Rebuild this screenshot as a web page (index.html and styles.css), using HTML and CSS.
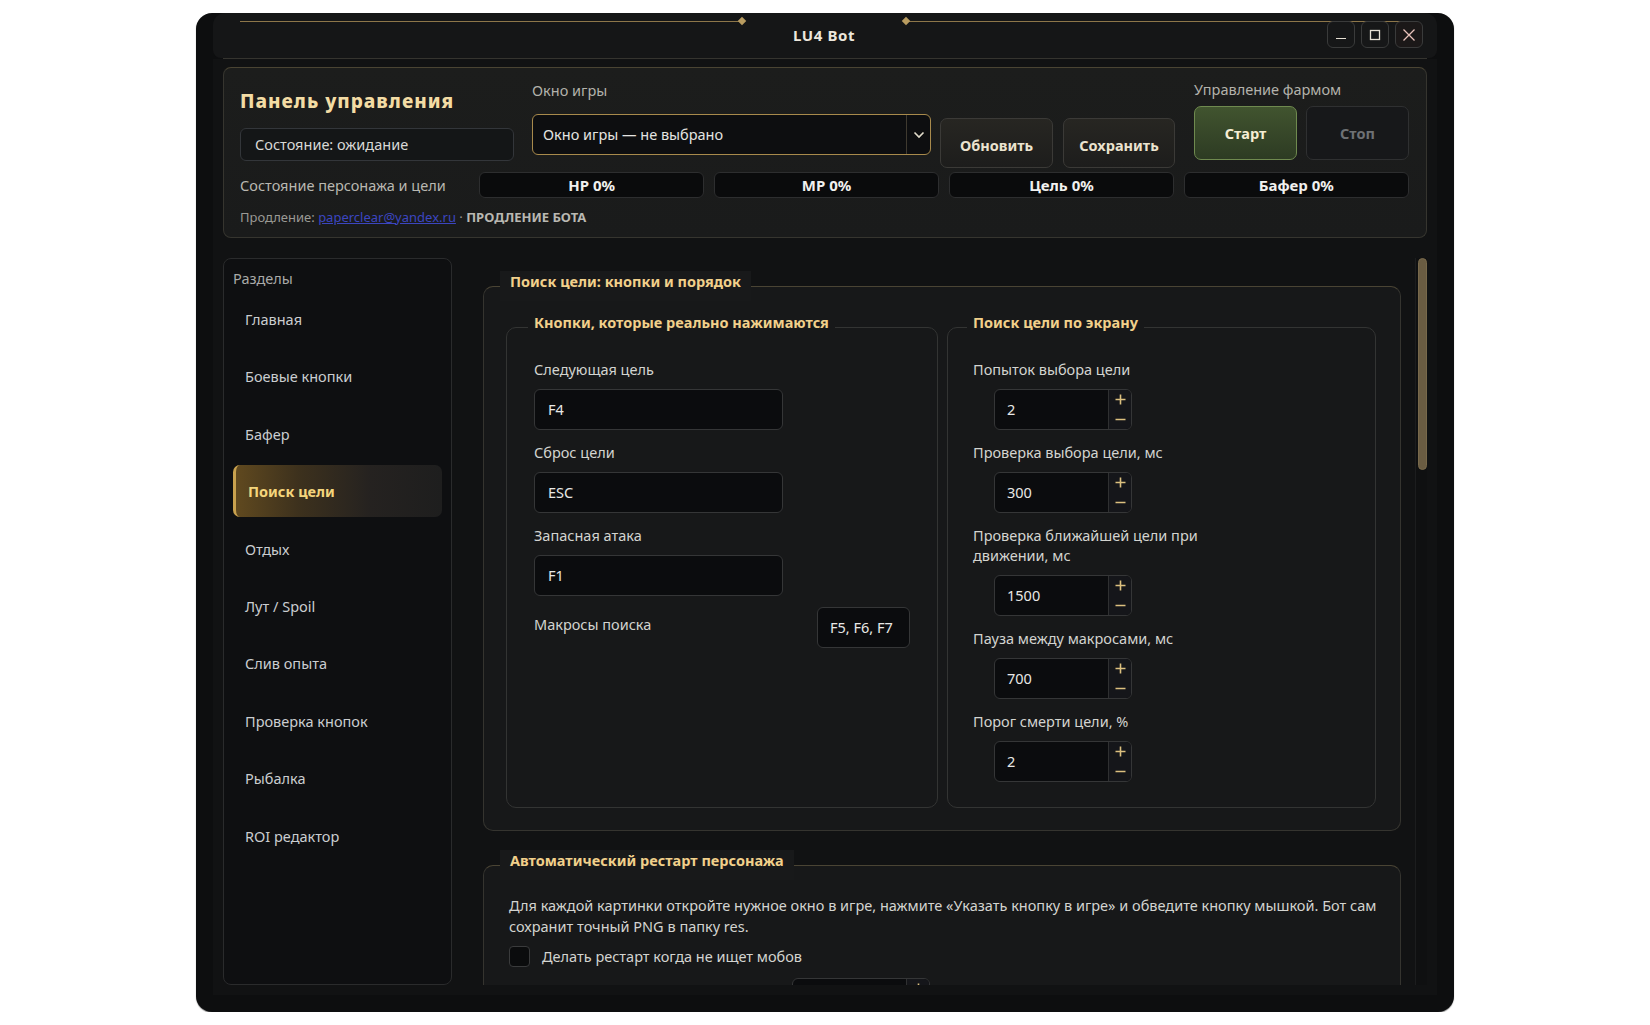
FILE: index.html
```html
<!DOCTYPE html>
<html lang="ru">
<head>
<meta charset="utf-8">
<title>LU4 Bot</title>
<link rel="stylesheet" href="styles.css">
</head>
<body>
<div class="window">
  <div class="titlebar">
    <div class="deco-line"></div>
    <div class="diamond"></div>
    <div class="title">LU4 Bot</div>
    <div class="diamond"></div>
    <div class="deco-line"></div>
    <div class="win-buttons">
      <div class="win-btn"><svg width="12" height="12" viewBox="0 0 12 12"><path d="M1 9.5h10" stroke="#e6e0d4" stroke-width="1.2"/></svg></div>
      <div class="win-btn"><svg width="12" height="12" viewBox="0 0 12 12"><rect x="1.5" y="1.5" width="9" height="9" fill="none" stroke="#e6e0d4" stroke-width="1.3"/></svg></div>
      <div class="win-btn close"><svg width="14" height="14" viewBox="0 0 14 14"><path d="M1.5 1.5l11 11M12.5 1.5l-11 11" stroke="#e8c2ba" stroke-width="1.3"/></svg></div>
    </div>
  </div>
  <div class="separator"></div>
  <div class="body">
    <div class="panel">
      <div class="row-a">
        <div class="col1">
          <div class="panel-title">Панель управления</div>
          <div class="state-box">Состояние: ожидание</div>
        </div>
        <div class="col2">
          <div class="small-label">Окно игры</div>
          <div class="combo">
            <span class="combo-text">Окно игры — не выбрано</span>
            <span class="combo-arrow"><svg width="12" height="8" viewBox="0 0 12 8"><path d="M1.5 1.5l4.5 4.5 4.5-4.5" fill="none" stroke="#e2dccb" stroke-width="1.6"/></svg></span>
          </div>
        </div>
        <div class="btn action">Обновить</div>
        <div class="btn action">Сохранить</div>
        <div class="col3">
          <div class="small-label">Управление фармом</div>
          <div class="farm-buttons">
            <div class="btn start">Старт</div>
            <div class="btn stop">Стоп</div>
          </div>
        </div>
      </div>
      <div class="row-b">
        <div class="row-b-label">Состояние персонажа и цели</div>
        <div class="pill">HP 0%</div>
        <div class="pill">MP 0%</div>
        <div class="pill">Цель 0%</div>
        <div class="pill">Бафер 0%</div>
      </div>
      <div class="row-c">Продление: <a href="#" class="mail">paperclear@yandex.ru</a> · <b>ПРОДЛЕНИЕ БОТА</b></div>
    </div>

    <div class="main">
      <div class="sidebar">
        <div class="sidebar-label">Разделы</div>
        <div class="nav">
          <div class="nav-item">Главная</div>
          <div class="nav-item">Боевые кнопки</div>
          <div class="nav-item">Бафер</div>
          <div class="nav-item active">Поиск цели</div>
          <div class="nav-item">Отдых</div>
          <div class="nav-item">Лут / Spoil</div>
          <div class="nav-item">Слив опыта</div>
          <div class="nav-item">Проверка кнопок</div>
          <div class="nav-item">Рыбалка</div>
          <div class="nav-item">ROI редактор</div>
        </div>
      </div>

      <div class="scroll-area">
        <div class="scroll-content">
          <fieldset class="group">
            <legend class="group-title">Поиск цели: кнопки и порядок</legend>
            <div class="subgroups">
              <fieldset class="subgroup sub-left">
                <legend class="sub-title">Кнопки, которые реально нажимаются</legend>
                <div class="field-label">Следующая цель</div>
                <div class="text-input">F4</div>
                <div class="field-label">Сброс цели</div>
                <div class="text-input">ESC</div>
                <div class="field-label">Запасная атака</div>
                <div class="text-input">F1</div>
                <div class="macro-row">
                  <div class="field-label macro-label">Макросы поиска</div>
                  <div class="text-input macro-input">F5, F6, F7</div>
                </div>
              </fieldset>
              <fieldset class="subgroup sub-right">
                <legend class="sub-title">Поиск цели по экрану</legend>
                <div class="field-label">Попыток выбора цели</div>
                <div class="spin"><span class="spin-value">2</span><span class="spin-btns"><span class="sb"><svg width="11" height="11" viewBox="0 0 11 11"><path d="M5.5 0.5v10M0.5 5.5h10" stroke="#dcc07f" stroke-width="1.6"/></svg></span><span class="sb"><svg width="11" height="11" viewBox="0 0 11 11"><path d="M0.5 5.5h10" stroke="#dcc07f" stroke-width="1.6"/></svg></span></span></div>
                <div class="field-label">Проверка выбора цели, мс</div>
                <div class="spin"><span class="spin-value">300</span><span class="spin-btns"><span class="sb"><svg width="11" height="11" viewBox="0 0 11 11"><path d="M5.5 0.5v10M0.5 5.5h10" stroke="#dcc07f" stroke-width="1.6"/></svg></span><span class="sb"><svg width="11" height="11" viewBox="0 0 11 11"><path d="M0.5 5.5h10" stroke="#dcc07f" stroke-width="1.6"/></svg></span></span></div>
                <div class="field-label">Проверка ближайшей цели при<br>движении, мс</div>
                <div class="spin"><span class="spin-value">1500</span><span class="spin-btns"><span class="sb"><svg width="11" height="11" viewBox="0 0 11 11"><path d="M5.5 0.5v10M0.5 5.5h10" stroke="#dcc07f" stroke-width="1.6"/></svg></span><span class="sb"><svg width="11" height="11" viewBox="0 0 11 11"><path d="M0.5 5.5h10" stroke="#dcc07f" stroke-width="1.6"/></svg></span></span></div>
                <div class="field-label">Пауза между макросами, мс</div>
                <div class="spin"><span class="spin-value">700</span><span class="spin-btns"><span class="sb"><svg width="11" height="11" viewBox="0 0 11 11"><path d="M5.5 0.5v10M0.5 5.5h10" stroke="#dcc07f" stroke-width="1.6"/></svg></span><span class="sb"><svg width="11" height="11" viewBox="0 0 11 11"><path d="M0.5 5.5h10" stroke="#dcc07f" stroke-width="1.6"/></svg></span></span></div>
                <div class="field-label">Порог смерти цели, %</div>
                <div class="spin"><span class="spin-value">2</span><span class="spin-btns"><span class="sb"><svg width="11" height="11" viewBox="0 0 11 11"><path d="M5.5 0.5v10M0.5 5.5h10" stroke="#dcc07f" stroke-width="1.6"/></svg></span><span class="sb"><svg width="11" height="11" viewBox="0 0 11 11"><path d="M0.5 5.5h10" stroke="#dcc07f" stroke-width="1.6"/></svg></span></span></div>
              </fieldset>
            </div>
          </fieldset>

          <fieldset class="group group2">
            <legend class="group-title">Автоматический рестарт персонажа</legend>
            <p class="desc">Для каждой картинки откройте нужное окно в игре, нажмите «Указать кнопку в игре» и обведите кнопку мышкой. Бот сам<br>сохранит точный PNG в папку res.</p>
            <label class="check-row"><span class="checkbox"></span><span>Делать рестарт когда не ищет мобов</span></label>
            <div class="restart-row">
              <div class="spin"><span class="spin-value"></span><span class="spin-btns"><span class="sb"><svg width="11" height="11" viewBox="0 0 11 11"><path d="M5.5 0.5v10M0.5 5.5h10" stroke="#dcc07f" stroke-width="1.6"/></svg></span><span class="sb"><svg width="11" height="11" viewBox="0 0 11 11"><path d="M0.5 5.5h10" stroke="#dcc07f" stroke-width="1.6"/></svg></span></span></div>
            </div>
          </fieldset>
        </div>
        <div class="scrollbar"><div class="thumb"></div></div>
      </div>
    </div>
  </div>
</div>
</body>
</html>
```

FILE: styles.css
```css
* { box-sizing: border-box; }

body {
  margin: 0;
  background: #ffffff;
  font-family: "Noto Sans", "Open Sans", sans-serif;
  font-size: 14.5px;
  color: #d2d3cf;
}

.window {
  width: 1258px;
  height: 999px;
  margin: 13px 0 0 196px;
  padding: 0 17px 17px;
  background: #0d0e0f;
  border-radius: 16px;
  box-shadow: 0 1px 1px rgba(0,0,0,0.45);
  display: flex;
  flex-direction: column;
  overflow: hidden;
}

/* ---------- title bar ---------- */
.titlebar {
  position: relative;
  height: 45px;
  flex: none;
  display: flex;
  align-items: flex-start;
  padding: 0 29px 0 27px;
  background: #151617;
  border-radius: 12px 12px 8px 8px;
}
.deco-line {
  flex: 1;
  height: 1px;
  margin-top: 8px;
  background: #8d7649;
}
.diamond {
  width: 6px;
  height: 6px;
  margin: 5px -3px 0;
  background: #b99c60;
  transform: rotate(45deg);
  flex: none;
}
.title {
  width: 164px;
  flex: none;
  text-align: center;
  line-height: 45px;
  font-weight: 700;
  font-size: 15px;
  letter-spacing: 0.6px;
  color: #ece7dc;
}
.win-buttons {
  position: absolute;
  top: 8px;
  right: 14px;
  display: flex;
  gap: 6px;
}
.win-btn {
  width: 28px;
  height: 27px;
  border: 1px solid #3a3b3b;
  border-radius: 6px;
  background: #161718;
  display: flex;
  align-items: center;
  justify-content: center;
}
.win-btn.close { background: #1b1818; }

.separator {
  height: 1px;
  margin: 0 10px;
  background: #35342f;
  flex: none;
}

.body {
  flex: 1;
  min-height: 0;
  padding: 8px 10px 10px;
  display: flex;
  flex-direction: column;
  gap: 20px;
  background: #111213;
}

/* ---------- top panel ---------- */
.panel {
  height: 171px;
  flex: none;
  border: 1px solid #36352f;
  border-top-color: #4a4433;
  border-radius: 8px;
  background: linear-gradient(180deg, #1c1d1c 0%, #1a1b1b 100%);
  padding: 12px 17px 11px 16px;
}
.row-a {
  display: flex;
  align-items: flex-start;
  height: 88px;
}
.col1 { width: 274px; flex: none; }
.panel-title {
  margin-top: 9px;
  line-height: 24px;
  font-size: 19px;
  font-weight: 800;
  letter-spacing: 1px;
  color: #f3dca4;
}
.state-box {
  margin-top: 15px;
  height: 33px;
  line-height: 31px;
  padding-left: 14px;
  border: 1px solid #33363a;
  border-radius: 6px;
  background: #141617;
  color: #d9d9d6;
}
.col2 { width: 399px; margin-left: 18px; flex: none; }
.small-label {
  line-height: 20px;
  color: #b3b2ab;
}
.col3 .small-label { line-height: 18px; }
.combo {
  margin-top: 14px;
  height: 41px;
  display: flex;
  border: 1px solid #a88a4c;
  border-radius: 6px;
  background: #0d0e10;
}
.combo-text {
  flex: 1;
  padding-left: 10px;
  line-height: 39px;
  color: #e4e4e1;
}
.combo-arrow {
  width: 24px;
  border-left: 1px solid #3f3a30;
  display: flex;
  align-items: center;
  justify-content: center;
}
.btn {
  display: flex;
  align-items: center;
  justify-content: center;
  font-weight: 700;
  font-size: 14.5px;
  border-radius: 7px;
}
.btn.action {
  width: 113px;
  height: 50px;
  margin-top: 38px;
  margin-left: 9px;
  border: 1px solid #3b3a37;
  background: linear-gradient(180deg, #272622 0%, #1d1d1c 100%);
  color: #ebe3cf;
  padding-top: 3px;
}
.btn.action + .btn.action { margin-left: 10px; width: 112px; }
.col3 { width: 215px; margin-left: 19px; flex: none; }
.farm-buttons {
  margin-top: 8px;
  display: flex;
  gap: 9px;
}
.btn.start, .btn.stop { width: 103px; height: 54px; }
.btn.start {
  border: 1px solid #6f8a4f;
  background: linear-gradient(180deg, #41542f 0%, #2d3b23 100%);
  color: #f6eed4;
}
.btn.stop {
  border: 1px solid #2f3031;
  background: #17181a;
  color: #6e7174;
}

.row-b {
  margin-top: 4px;
  height: 26px;
  display: flex;
  gap: 9.5px;
}
.row-b-label {
  width: 229.5px;
  flex: none;
  line-height: 26px;
  color: #b9b8b1;
}
.pill {
  flex: 1;
  border: 1px solid #2d2e2f;
  border-radius: 6px;
  background: #0a0b0c;
  text-align: center;
  line-height: 24px;
  font-weight: 700;
  font-size: 15px;
  color: #f1f1ef;
}
.row-c {
  margin-top: 10px;
  line-height: 18px;
  font-size: 13px;
  color: #9a9a95;
}
.row-c .mail { color: #3c46c0; text-decoration: underline; }
.row-c b { color: #b9b8b2; }

/* ---------- main area ---------- */
.main {
  flex: 1;
  display: flex;
  gap: 11px;
  min-height: 0;
  overflow: hidden;
}
.sidebar {
  width: 229px;
  flex: none;
  border: 1px solid #2a2b2c;
  border-radius: 8px;
  background: #0e0f11;
  padding: 9px 9px 0;
}
.sidebar-label {
  line-height: 20px;
  color: #a9aaa8;
  margin-bottom: 5px;
}
.nav {
  display: flex;
  flex-direction: column;
  gap: 5.4px;
}
.nav-item {
  height: 52px;
  line-height: 52px;
  padding-left: 12px;
  border-radius: 7px;
  color: #cacdd0;
}
.nav-item.active {
  border-left: 3px solid #c8a14e;
  background: linear-gradient(90deg, #60491f 0%, #3d311d 30%, #252220 65%, #1e1e1e 100%);
  font-weight: 700;
  color: #f4d57c;
}

.scroll-area {
  flex: 1;
  display: flex;
  min-width: 0;
  min-height: 0;
}
.scroll-content {
  flex: 1;
  overflow: hidden;
  padding: 13px 14px 0 20px;
}
.scrollbar {
  width: 12px;
  flex: none;
  border-left: 1px solid #1c1d1e;
  background: #0f1011;
  padding-left: 2px;
}
.thumb {
  width: 9px;
  height: 212px;
  border-radius: 5px;
  background: #6a5c42;
  border: 1px solid #78694b;
}

/* ---------- groups ---------- */
fieldset {
  margin: 0;
  min-width: 0;
}
.group {
  border: 1px solid #35342f;
  border-top-color: #4a4434;
  border-radius: 10px;
  background: #171819;
  padding: 11px 24px 22px 22px;
}
.group-title {
  margin-left: -6px;
  padding: 0 10px 10px;
  line-height: 20px;
  background: #18191a;
  font-weight: 700;
  font-size: 14.5px;
  color: #f1d08b;
}
.subgroups {
  display: flex;
  gap: 9px;
  height: 496px;
}
.subgroup {
  flex: 1;
  border: 1px solid #333433;
  border-radius: 10px;
  background: #171819;
  padding: 17px 20px 0 27px;
}
.sub-left { flex: 0 0 432px; }
.sub-right { padding-left: 25px; }
.sub-title {
  margin-left: -6px;
  padding: 0 6px 10px;
  line-height: 20px;
  background: #171819;
  font-weight: 700;
  font-size: 14.5px;
  color: #f1d08b;
}
.field-label {
  line-height: 20px;
  margin-bottom: 10px;
  color: #d3d4d0;
}
.text-input {
  width: 249px;
  height: 41px;
  margin-bottom: 12px;
  padding-left: 13px;
  line-height: 39px;
  border: 1px solid #353637;
  border-radius: 6px;
  background: #0b0c0e;
  color: #e8e8e6;
}
.macro-row {
  display: flex;
  align-items: flex-start;
  margin-top: -1px;
}
.macro-label { width: 283px; flex: none; margin-top: 7px; }
.text-input.macro-input { width: 93px; padding-left: 12px; }

.spin {
  width: 138px;
  height: 41px;
  margin: 0 0 12px 21px;
  display: flex;
  border: 1px solid #353637;
  border-radius: 6px;
  background: #0b0c0e;
  overflow: hidden;
}
.spin-value {
  flex: 1;
  padding-left: 12px;
  line-height: 39px;
  color: #e8e8e6;
}
.spin-btns {
  width: 23px;
  border-left: 1px solid #2f3031;
  background: #15161a;
  display: flex;
  flex-direction: column;
}
.sb {
  flex: 1;
  display: flex;
  align-items: center;
  justify-content: center;
}

.group2 {
  margin-top: 19px;
  padding: 15px 24px 0 25px;
}
.group2 .group-title { margin-left: -9px; }
.desc {
  margin: 0;
  line-height: 21px;
  white-space: nowrap;
  color: #d3d4d0;
}
.check-row {
  margin-top: 9px;
  display: flex;
  align-items: center;
  gap: 12px;
  line-height: 21px;
  color: #d3d4d0;
}
.checkbox {
  width: 21px;
  height: 21px;
  border: 1px solid #3a3b3c;
  border-radius: 4px;
  background: #0b0c0d;
}
.restart-row {
  margin-top: 11px;
  padding-left: 262px;
}
```
